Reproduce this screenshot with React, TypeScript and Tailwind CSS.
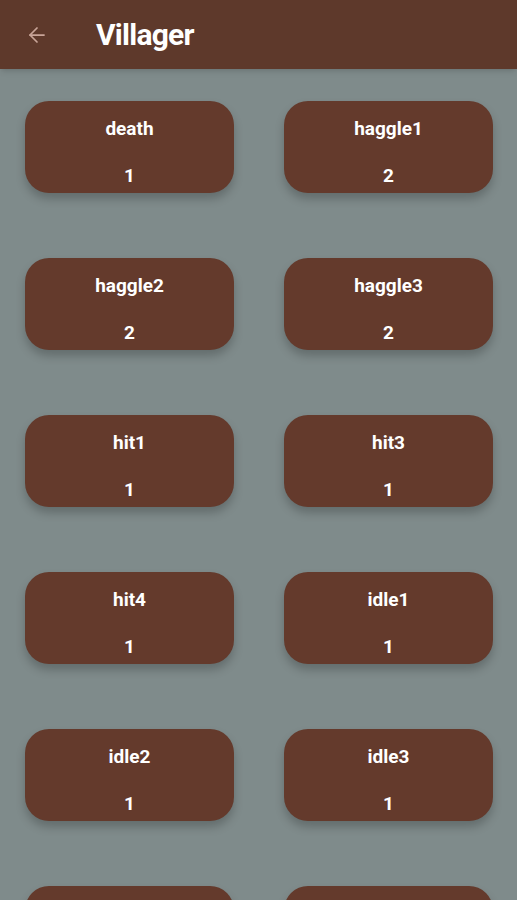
import { ArrowLeft } from 'lucide-react'

const sounds = [
  { name: 'death', count: 1 },
  { name: 'haggle1', count: 2 },
  { name: 'haggle2', count: 2 },
  { name: 'haggle3', count: 2 },
  { name: 'hit1', count: 1 },
  { name: 'hit3', count: 1 },
  { name: 'hit4', count: 1 },
  { name: 'idle1', count: 1 },
  { name: 'idle2', count: 1 },
  { name: 'idle3', count: 1 },
  { name: 'no', count: 3 },
  { name: 'trade', count: 3 },
]

export default function App() {
  return (
    <div className="h-[900px] overflow-hidden bg-[#7f8b8b] font-['Roboto',sans-serif]">
      <header className="h-[69px] bg-[#5e392b] flex items-center shadow-md">
        <button type="button" className="ml-[25px] text-[#c9a599]">
          <ArrowLeft className="w-[24px] h-[24px]" strokeWidth={1.75} />
        </button>
        <h1 className="ml-[47px] text-[30px] font-bold text-white tracking-tight">Villager</h1>
      </header>

      <div className="grid grid-cols-2 gap-x-[50px] gap-y-[65px] pl-[25px] pr-[24px] pt-[32px]">
        {sounds.map((s) => (
          <div
            key={s.name}
            className="h-[92px] rounded-[24px] bg-[#643a2c] shadow-[0_6px_10px_rgba(0,0,0,0.22)] flex flex-col items-center text-white font-bold text-[19px]"
          >
            <span className="mt-[16px] leading-6">{s.name}</span>
            <span className="mt-[23px] leading-6">{s.count}</span>
          </div>
        ))}
      </div>
    </div>
  )
}
